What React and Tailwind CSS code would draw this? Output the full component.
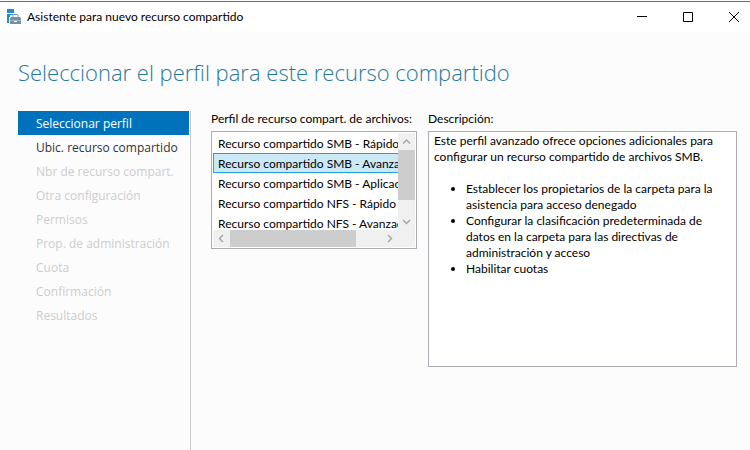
const steps = [
  'Seleccionar perfil',
  'Ubic. recurso compartido',
  'Nbr de recurso compart.',
  'Otra configuración',
  'Permisos',
  'Prop. de administración',
  'Cuota',
  'Confirmación',
  'Resultados',
];

const stepStyles = {
  active: 'bg-[#0072bc] text-white',
  next: 'text-[#333333]',
  disabled: 'text-[#cccccc]',
};

const profiles = [
  'Recurso compartido SMB - Rápido',
  'Recurso compartido SMB - Avanzado',
  'Recurso compartido SMB - Aplicaciones',
  'Recurso compartido NFS - Rápido',
  'Recurso compartido NFS - Avanzado',
];

function WizardIcon() {
  return (
    <svg className="h-4 w-4 shrink-0" viewBox="0 0 16 16" aria-hidden="true">
      <path d="M1 0h7v4H1zM1 5h6v1H4v2H3v6H1z" fill="#1e8ad6" />
      <path d="M7 8V6.500q0-1 1-1h3q1 0 1 1V8" fill="none" stroke="#7890a6" />
      <path d="M5 8h9l1 1v2H4V9zM4 12h4v1h3v-1h4v3H4z" fill="#7890a6" />
      <path d="M4 11h11v1H4z" fill="#a9b8c5" />
    </svg>
  );
}

function CaptionButton({ label, path }) {
  return (
    <button type="button" aria-label={label} className="flex h-full w-8 items-center justify-center">
      <svg className="h-[10px] w-[10px]" viewBox="0 0 10 10" fill="none" stroke="#000" aria-hidden="true">
        <path d={path} />
      </svg>
    </button>
  );
}

function ScrollArrow({ label, path }) {
  return (
    <button type="button" aria-label={label} className="flex h-[17px] w-[17px] shrink-0 items-center justify-center">
      <svg className="h-[9px] w-[9px]" viewBox="0 0 9 9" fill="none" stroke="#a3a3a3" strokeWidth="1.4" aria-hidden="true">
        <path d={path} />
      </svg>
    </button>
  );
}

function ProfileList() {
  return (
    <div className="border border-[#abadb3] bg-white p-px">
      <div className="flex h-[97px]">
        <ul role="listbox" aria-labelledby="profile-label" className="min-w-0 flex-1 overflow-hidden">
          {profiles.map((name, i) => (
            <li
              key={name}
              role="option"
              aria-selected={i === 1}
              className={`h-5 border border-r-0 pl-1 leading-5 whitespace-nowrap ${
                i === 1 ? 'border-[#26a0da] bg-[#cbe8f6]' : 'border-transparent'
              }`}
            >
              {name}
            </li>
          ))}
        </ul>
        <div className="flex w-[17px] flex-col bg-[#f0f0f0]">
          <ScrollArrow label="Subir" path="M1 6.5L4.500 3L8 6.500" />
          <div className="h-[50px] bg-[#cdcdcd]" />
          <div className="flex-1" />
          <ScrollArrow label="Bajar" path="M1 3L4.500 6.500L8 3" />
        </div>
      </div>
      <div className="flex h-[17px] bg-[#f0f0f0] pr-[17px]">
        <ScrollArrow label="Izquierda" path="M6 1L2.500 4.500L6 8" />
        <div className="w-[126px] bg-[#cdcdcd]" />
        <div className="flex-1" />
        <ScrollArrow label="Derecha" path="M3 1L6.500 4.500L3 8" />
      </div>
    </div>
  );
}

export default function App() {
  return (
    <div className="flex min-h-screen flex-col bg-[#fcfcfc] pt-px font-['Lato','Open_Sans',sans-serif] text-[12px] text-black">
      <header className="flex h-[31px] items-center border-t border-[#6b6b6b] bg-white pl-[6px]">
        <WizardIcon />
        <span className="flex-1 pl-[5px]">Asistente para nuevo recurso compartido</span>
        <div className="flex h-full gap-[14px]">
          <CaptionButton label="Minimizar" path="M0 4.5H10" />
          <CaptionButton label="Maximizar" path="M.5 .5H9.500V9.500H.5Z" />
          <CaptionButton label="Cerrar" path="M0 0L10 10M10 0L0 10" />
        </div>
      </header>

      <h1 className="px-[18px] pt-6 font-['Open_Sans',sans-serif] text-[22px] leading-8 font-light text-[#1f7a9c]">
        Seleccionar el perfil para este recurso compartido
      </h1>

      <main className="flex flex-1 items-stretch pt-[23px] pr-[13px] pl-[18px]">
        <nav className="w-[173px] shrink-0 border-r border-[#c8c8c8] pr-px">
          <ol className="font-['Open_Sans',sans-serif] text-[12px]">
            {steps.map((step, i) => (
              <li key={step}>
                <button
                  type="button"
                  disabled={i > 1}
                  className={`block h-6 w-full pt-px pl-[18px] text-left leading-6 whitespace-nowrap ${
                    i === 0 ? stepStyles.active : i === 1 ? stepStyles.next : stepStyles.disabled
                  }`}
                >
                  {step}
                </button>
              </li>
            ))}
          </ol>
        </nav>

        <section className="ml-5 w-[206px] shrink-0">
          <h2 id="profile-label" className="h-5 leading-4 whitespace-nowrap">
            Perfil de recurso compart. de archivos:
          </h2>
          <ProfileList />
        </section>

        <section className="ml-[11px] min-w-0 flex-1">
          <h2 className="h-5 leading-4">Descripción:</h2>
          <div className="min-h-[236px] border border-[#abadb3] bg-white pt-px pr-4 pl-[5px] leading-4">
            <p>Este perfil avanzado ofrece opciones adicionales para configurar un recurso compartido de archivos SMB.</p>
            <ul className="mt-4 list-disc pl-8">
              <li>Establecer los propietarios de la carpeta para la asistencia para acceso denegado</li>
              <li>Configurar la clasificación predeterminada de datos en la carpeta para las directivas de administración y acceso</li>
              <li>Habilitar cuotas</li>
            </ul>
          </div>
        </section>
      </main>
    </div>
  );
}
